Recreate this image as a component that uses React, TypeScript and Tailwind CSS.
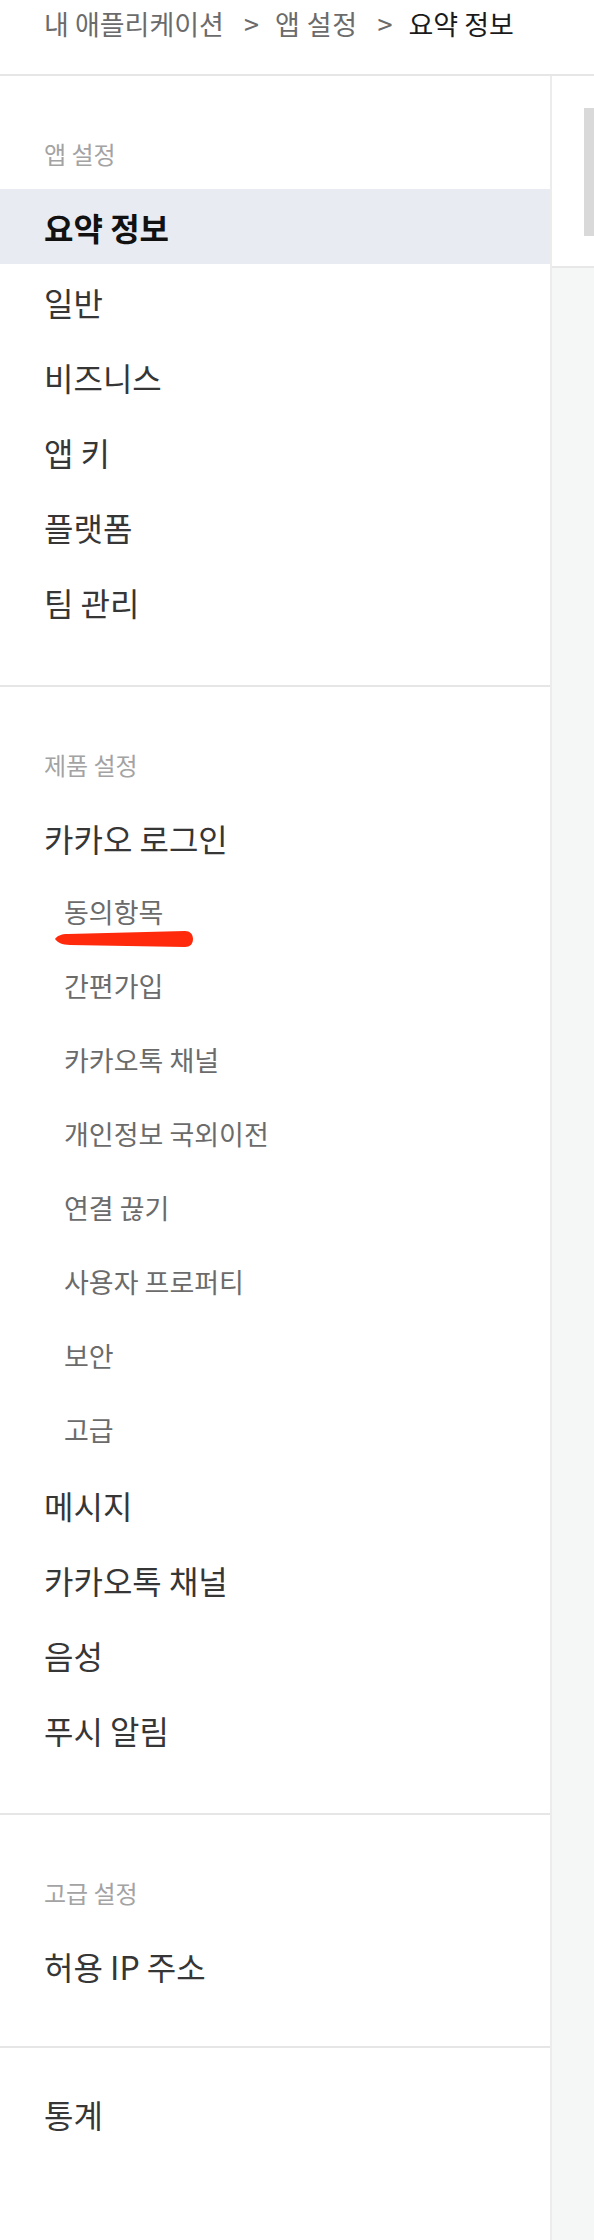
import { FC, ReactNode } from "react";

const font = "font-['Noto_Sans_CJK_KR','Noto_Sans',sans-serif]";

const SectionLabel: FC<{ children: ReactNode }> = ({ children }) => (
    <p className="pt-[35px] pb-[20px] text-[24px] leading-[30px] text-[#a3a3a3]">{children}</p>
);

const MenuItem: FC<{ label: string; active?: boolean }> = ({ label, active }) => (
    <div
        className={
            active
                ? "flex h-[75px] items-center bg-[#e9ebf2] pl-[44px] text-[32px] font-bold text-[#111111]"
                : "flex h-[75px] items-center pl-[44px] text-[32px] text-[#363636]"
        }
    >
        {label}
    </div>
);

const SubItem: FC<{ label: string; children?: ReactNode }> = ({ label, children }) => (
    <div className="relative flex h-[74px] items-center pl-[64px] text-[27px] text-[#6b6b6b]">
        {label}
        {children}
    </div>
);

const Group: FC<{ children: ReactNode; pb?: string }> = ({ children, pb = "pb-[46px]" }) => (
    <div className={`pt-[28px] ${pb} border-b-2 border-[#e6e6e6]`}>{children}</div>
);

export default function App() {
    const appSettings = ["일반", "비즈니스", "앱 키", "플랫폼", "팀 관리"];
    const loginSubs = ["간편가입", "카카오톡 채널", "개인정보 국외이전", "연결 끊기", "사용자 프로퍼티", "보안", "고급"];
    const productItems = ["메시지", "카카오톡 채널", "음성", "푸시 알림"];

    return (
        <div className={`${font} w-[594px] h-[2240px] overflow-hidden bg-white flex flex-col`}>
            {/* breadcrumb */}
            <div className="h-[76px] shrink-0 border-b-2 border-[#e6e6e6] pl-[44px] pt-[6px]">
                <div className="flex items-center text-[27px] leading-[36px] text-[#6b6b6b]">
                    <span>내 애플리케이션</span>
                    <span className="ml-[20px] mr-[16px]">&gt;</span>
                    <span className="tracking-[0.5px]">앱 설정</span>
                    <span className="ml-[20px] mr-[16px]">&gt;</span>
                    <span className="text-[#1a1a1a]">요약 정보</span>
                </div>
            </div>

            <div className="flex flex-1">
                {/* sidebar */}
                <div className="w-[552px] shrink-0 border-r-2 border-[#ececec]">
                    <Group>
                        <div className="pl-[44px]">
                            <SectionLabel>앱 설정</SectionLabel>
                        </div>
                        <MenuItem label="요약 정보" active />
                        {appSettings.map((l) => (
                            <MenuItem key={l} label={l} />
                        ))}
                    </Group>

                    <Group>
                        <div className="pl-[44px]">
                            <SectionLabel>제품 설정</SectionLabel>
                        </div>
                        <MenuItem label="카카오 로그인" />
                        <SubItem label="동의항목">
                            <svg className="absolute left-[54px] top-[54px]" width="142" height="20" viewBox="0 0 142 20">
                                <path
                                    d="M1 10 C3 7 7 5 14 5 L131 2 C136 2 139 5 139 10 C139 15 136 18 131 18 L16 16 C8 16 3 13 1 10 Z"
                                    fill="#ff2a0c"
                                />
                            </svg>
                        </SubItem>
                        {loginSubs.map((l) => (
                            <SubItem key={l} label={l} />
                        ))}
                        {productItems.map((l, i) => (
                            <MenuItem key={i} label={l} />
                        ))}
                    </Group>

                    <Group pb="pb-[43px]">
                        <div className="pl-[44px]">
                            <SectionLabel>고급 설정</SectionLabel>
                        </div>
                        <MenuItem label="허용 IP 주소" />
                    </Group>

                    <div className="pt-[28px]">
                        <MenuItem label="통계" />
                    </div>
                </div>

                {/* content edge */}
                <div className="flex flex-1 flex-col">
                    <div className="h-[192px] border-b-2 border-[#e8e8e8] bg-white pt-[32px] pl-[32px]">
                        <div className="h-[128px] bg-[#d9d9d9]" />
                    </div>
                    <div className="flex-1 bg-[#f5f6f6]" />
                </div>
            </div>
        </div>
    );
}
